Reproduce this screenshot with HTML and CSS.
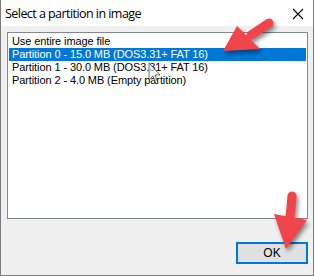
FILE: index.html
```html
<!DOCTYPE html>
<html>
<head>
<meta charset="utf-8">
<link rel="stylesheet" href="styles.css">
</head>
<body>
<div class="window">
  <div class="titlebar">
    <span class="title">Select a partition in image</span>
    <svg class="close" width="12" height="12" viewBox="0 0 12 12"><path d="M1 1L11 11M11 1L1 11" stroke="#000" stroke-width="1.1" fill="none"/></svg>
  </div>
  <div class="content">
    <div class="listbox">
      <div class="item">Use entire image file</div>
      <div class="item selected">Partition 0 - 15.0 MB (DOS3.31+ FAT 16)</div>
      <div class="item">Partition 1 - 30.0 MB (DOS3.31+ FAT 16)</div>
      <div class="item">Partition 2 - 4.0 MB (Empty partition)</div>
    </div>
    <div class="footer">
      <button class="ok">OK</button>
    </div>
  </div>
  <svg class="cursor" width="14" height="26" viewBox="0 0 14 26"><path d="M1 1L1 18L5 14L8 22L10 21L7 13L12 13Z" fill="rgba(255,255,255,0.6)" stroke="#444" stroke-width="0.8"/></svg>
  <svg class="arrow arrow1" width="70" height="50" viewBox="0 0 70 50"><path d="M48 6L30 18" stroke="#f2444b" stroke-width="9" stroke-linecap="round" fill="none"/><path d="M2 34L16 9L39 32Z" fill="#f2444b"/></svg>
  <svg class="arrow arrow2" width="44" height="70" viewBox="0 0 44 70"><path d="M20 6L18 28" stroke="#f2444b" stroke-width="9" stroke-linecap="round" fill="none"/><path d="M2 24L35 30L14 59Z" fill="#f2444b"/></svg>
</div>
</body>
</html>
```
FILE: styles.css
```css
html, body {
  margin: 0;
  padding: 0;
  background: #ffffff;
}
.window {
  position: relative;
  width: 314px;
  height: 276px;
  box-sizing: border-box;
  border-left: 1px solid #7a7a7a;
  border-right: 1px solid #7a7a7a;
  border-bottom: 1px solid #7a7a7a;
  display: flex;
  flex-direction: column;
  overflow: hidden;
}
.titlebar {
  height: 26px;
  background: #ffffff;
  display: flex;
  align-items: center;
  justify-content: space-between;
  padding: 0 9px 0 4px;
  flex-shrink: 0;
}
.title {
  font-family: "Open Sans", "Noto Sans", sans-serif;
  font-size: 12.5px;
  letter-spacing: -0.55px;
  color: #000;
  margin-top: 1px;
}
.close {
  display: block;
  margin-top: 1px;
}
.content {
  flex: 1;
  background: #f0f0f0;
  display: flex;
  flex-direction: column;
  padding: 6px 5px 11px 6px;
}
.listbox {
  height: 187px;
  box-sizing: border-box;
  background: #ffffff;
  border: 1px solid #828790;
  padding: 2px 1px;
  font-family: "Liberation Sans", Arial, sans-serif;
  font-size: 11px;
  letter-spacing: -0.1px;
}
.item {
  height: 13px;
  line-height: 13px;
  padding-left: 3px;
  color: #000;
  white-space: nowrap;
}
.item.selected {
  background: #0078d7;
  color: #ffffff;
}
.footer {
  flex: 1;
  display: flex;
  justify-content: flex-end;
  align-items: flex-end;
}
.ok {
  width: 72px;
  height: 22px;
  box-sizing: border-box;
  border: 2px solid #0078d7;
  background: #e1e1e1;
  font-family: "Liberation Sans", Arial, sans-serif;
  font-size: 12px;
  color: #000;
  padding: 0;
  margin: 0;
}
.arrow {
  position: absolute;
  filter: drop-shadow(2px 3px 2px rgba(0,0,0,0.45));
}
.arrow1 {
  left: 220px;
  top: 17px;
}
.arrow2 {
  left: 271px;
  top: 190px;
}
.cursor {
  position: absolute;
  left: 147px;
  top: 62px;
}
```
